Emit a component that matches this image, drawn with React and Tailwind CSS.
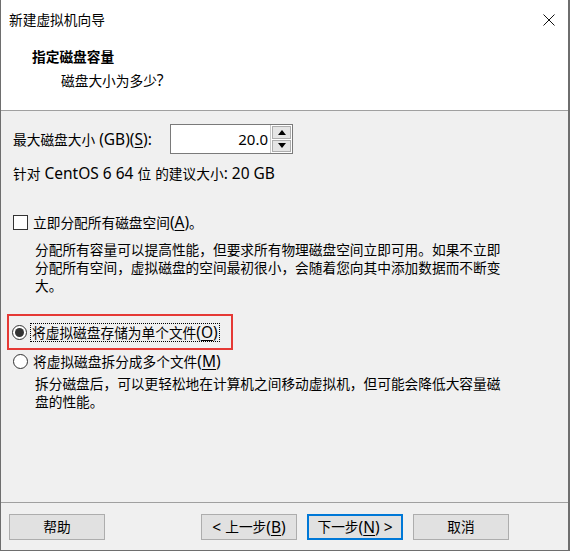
import { useState } from "react";

// Latin runs are drawn a bit larger, as the dialog font does
function L({ children }) {
  return <span className="text-[15.5px]">{children}</span>;
}

function U({ children }) {
  return <span className="underline underline-offset-2">{children}</span>;
}

function Button({ children, primary }) {
  return (
    <button
      className={`flex h-[26px] w-[96px] items-center justify-center bg-[#e1e1e1] text-[13.7px] text-black ${
        primary ? "border-2 border-[#0078d7]" : "border border-[#adadad]"
      }`}
    >
      {children}
    </button>
  );
}

function Radio({ checked }) {
  return (
    <span className="flex h-[15px] w-[15px] shrink-0 items-center justify-center rounded-full border border-[#333] bg-white">
      {checked && <span className="h-[9px] w-[9px] rounded-full bg-[#333]" />}
    </span>
  );
}

export default function App() {
  const [mode, setMode] = useState("single");
  const [allocate, setAllocate] = useState(false);

  return (
    <div className="flex h-[551px] w-[570px] flex-col border-r-2 border-b border-l border-[#6e6e6e] bg-[#f0f0f0] font-['Noto_Sans','Noto_Sans_CJK_SC',sans-serif] text-[13.7px] leading-[18px] text-black">
      <header className="h-[111px] shrink-0 border-b border-[#a0a0a0] bg-white">
        <div className="flex h-[40px] items-center justify-between pr-[13px] pl-[8px]">
          <span>新建虚拟机向导</span>
          <svg width="12" height="12" viewBox="0 0 12 12">
            <path d="M0.5 0.5 L11.5 11.5 M11.5 0.5 L0.5 11.5" stroke="#111" strokeWidth="1" />
          </svg>
        </div>
        <div className="mt-[8px] pl-[31px] font-bold">指定磁盘容量</div>
        <div className="mt-[5px] pl-[60px]">
          磁盘大小为多少<L>?</L>
        </div>
      </header>

      <main className="pl-[12px]">
        <div className="mt-[13px] flex h-[30px] items-center">
          <span className="w-[157px]">
            最大磁盘大小<L>&nbsp;(GB)(<U>S</U>):</L>
          </span>
          <div className="flex h-[30px] w-[123px] border border-[#7a7a7a] bg-white">
            <div className="flex flex-1 items-center justify-end border-r border-[#c8c8c8] pr-[2px] text-[15px]">
              20.0
            </div>
            <div className="flex w-[21px] flex-col gap-px p-px">
              <div className="flex flex-1 items-center justify-center border border-[#adadad] bg-[#e5e5e5]">
                <svg width="8" height="5" viewBox="0 0 8 5">
                  <path d="M0 5 L4 0 L8 5 Z" fill="#000" />
                </svg>
              </div>
              <div className="flex flex-1 items-center justify-center border border-[#adadad] bg-[#e5e5e5]">
                <svg width="8" height="5" viewBox="0 0 8 5">
                  <path d="M0 0 L8 0 L4 5 Z" fill="#000" />
                </svg>
              </div>
            </div>
          </div>
        </div>

        <div className="mt-[10px]">
          针对<L>&nbsp;CentOS 6 64&nbsp;</L>位<L>&nbsp;</L>的建议大小<L>: 20 GB</L>
        </div>

        <label className="mt-[30px] flex h-[18px] items-center gap-[5px]" onClick={() => setAllocate((v) => !v)}>
          <span className="flex h-[15px] w-[15px] items-center justify-center border border-[#333] bg-white">
            {allocate && <span className="text-[11px] leading-none">✓</span>}
          </span>
          <span>
            立即分配所有磁盘空间<L>(<U>A</U>)</L>。
          </span>
        </label>
        <p className="mt-[10px] pl-[22px]">
          分配所有容量可以提高性能，但要求所有物理磁盘空间立即可用。如果不立即
          <br />
          分配所有空间，虚拟磁盘的空间最初很小，会随着您向其中添加数据而不断变
          <br />
          大。
        </p>

        <div
          className="mt-[19px] ml-[-6px] flex h-[36px] w-[226px] items-center gap-[3px] border-2 border-[#e53935] pl-[3px]"
          onClick={() => setMode("single")}
        >
          <Radio checked={mode === "single"} />
          <span className="border border-dotted border-black px-px leading-[17px]">
            将虚拟磁盘存储为单个文件<L>(<U>O</U>)</L>
          </span>
        </div>
        <div className="mt-[2px] flex h-[18px] items-center gap-[5px]" onClick={() => setMode("split")}>
          <Radio checked={mode === "split"} />
          <span>
            将虚拟磁盘拆分成多个文件<L>(<U>M</U>)</L>
          </span>
        </div>
        <p className="mt-[5px] pl-[22px]">
          拆分磁盘后，可以更轻松地在计算机之间移动虚拟机，但可能会降低大容量磁
          <br />
          盘的性能。
        </p>
      </main>

      <footer className="mt-auto flex h-[48px] shrink-0 items-start border-t border-[#a0a0a0] pt-[11px] pl-[8px]">
        <Button>帮助</Button>
        <div className="ml-[96px] flex gap-[10px]">
          <Button>
            <L>&lt;&nbsp;</L>上一步<L>(<U>B</U>)</L>
          </Button>
          <Button primary>
            下一步<L>(<U>N</U>)&nbsp;&gt;</L>
          </Button>
          <Button>取消</Button>
        </div>
      </footer>
    </div>
  );
}
